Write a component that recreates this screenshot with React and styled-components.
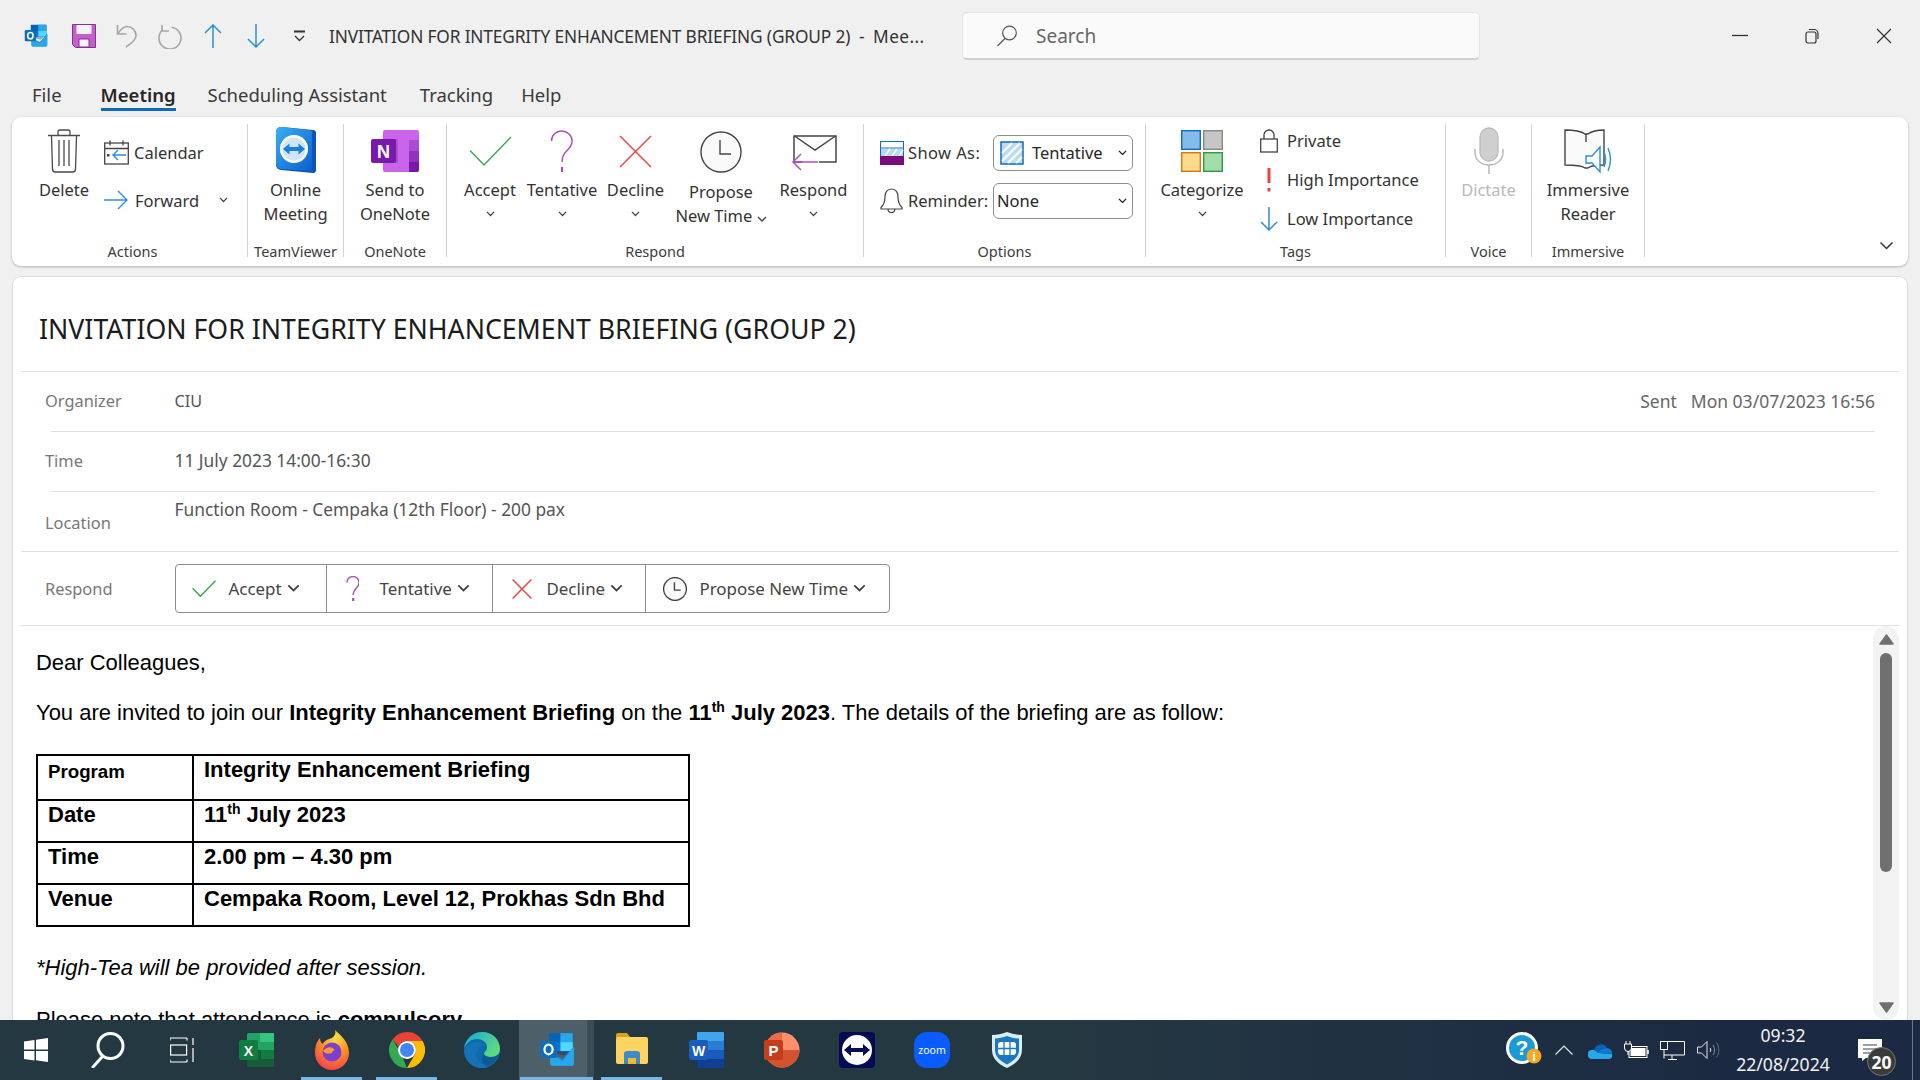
import React from "react";
import styled, { createGlobalStyle } from "styled-components";

const GlobalStyle = createGlobalStyle`
  html, body { margin: 0; padding: 0; height: 100%; overflow: hidden; }
  body { font-family: "Noto Sans", "Open Sans", sans-serif; background: #f0f0f0; color: #333; }
  * { box-sizing: border-box; }
`;

const Page = styled.div`
  width: 1920px;
  height: 1080px;
  display: flex;
  flex-direction: column;
  overflow: hidden;
`;

/* title bar */
const TitleBar = styled.div`
  height: 72px;
  flex: none;
  display: flex;
  align-items: center;
  padding-left: 24px;
`;
const QuickSlot = styled.div`
  width: ${(p) => p.$w}px;
  height: 24px;
  flex: none;
  display: flex;
  align-items: center;
`;
const WindowTitle = styled.div`
  width: 633px;
  flex: none;
  font-size: 17.3px;
  color: #333;
  white-space: pre;
  letter-spacing: -0.14px;
`;
const TitleTail = styled.span`
  letter-spacing: 0.4px;
`;
const SearchBox = styled.div`
  width: 518px;
  height: 48px;
  flex: none;
  display: flex;
  align-items: center;
  gap: 18px;
  padding-left: 33px;
  background: #fafafa;
  border: 1px solid #e4e4e4;
  border-bottom: 2px solid #cfcfcf;
  border-radius: 5px;
  font-size: 19px;
  color: #666;
`;
const WindowControls = styled.div`
  margin-left: auto;
  display: flex;
  padding-right: 28px;
  gap: 56px;
`;

/* tabs */
const TabRow = styled.div`
  height: 45px;
  flex: none;
  display: flex;
  padding-left: 32px;
`;
const Tab = styled.div`
  margin-right: ${(p) => p.$gap}px;
  height: 39px;
  line-height: 46px;
  font-size: 18.5px;
  color: ${(p) => (p.$active ? "#262626" : "#3a3a3a")};
  font-weight: ${(p) => (p.$active ? 600 : 400)};
  border-bottom: ${(p) => (p.$active ? "3px solid #0f6cbd" : "none")};
  white-space: nowrap;
`;

/* ribbon */
const Ribbon = styled.div`
  height: 149px;
  flex: none;
  margin: 0 12px;
  padding-top: 7px;
  display: flex;
  position: relative;
  background: #fff;
  border-radius: 9px;
  box-shadow: 0 1px 3px rgba(0, 0, 0, 0.25);
`;
const Group = styled.div`
  width: ${(p) => p.$w}px;
  height: 133px;
  flex: none;
  display: flex;
  flex-direction: column;
  border-right: 1px solid #d2d2d2;
`;
const GroupBody = styled.div`
  flex: 1;
  min-height: 0;
  display: flex;
  justify-content: ${(p) => p.$justify || "flex-start"};
  padding-left: ${(p) => p.$pad || 0}px;
`;
const GroupLabel = styled.div`
  height: 18px;
  margin-bottom: -3px;
  line-height: 18px;
  text-align: center;
  font-size: 14.5px;
  color: #3c3c3c;
  padding-left: ${(p) => p.$indent || 0}px;
  white-space: nowrap;
`;
const BigButton = styled.div`
  width: ${(p) => p.$w || 72}px;
  flex: none;
  display: flex;
  flex-direction: column;
  align-items: center;
  font-size: 16.5px;
  line-height: 24px;
  color: ${(p) => (p.$disabled ? "#b9b9b9" : "#333")};
  white-space: nowrap;
`;
const BigIcon = styled.div`
  height: ${(p) => p.$h || 54}px;
  padding-top: ${(p) => p.$shift || 0}px;
  flex: none;
  display: flex;
  align-items: center;
  justify-content: center;
`;
const ChevronLine = styled.div`
  height: 24px;
  display: flex;
  align-items: center;
`;
const SmallColumn = styled.div`
  display: flex;
  flex-direction: column;
  margin-top: ${(p) => p.$top}px;
  margin-left: ${(p) => p.$left || 0}px;
  width: ${(p) => p.$w}px;
`;
const SmallRow = styled.div`
  height: ${(p) => p.$h}px;
  display: flex;
  align-items: center;
  font-size: 16.5px;
  color: #333;
  white-space: nowrap;
`;
const SmallIcon = styled.div`
  width: ${(p) => p.$w}px;
  flex: none;
  display: flex;
  align-items: center;
`;
const PushRight = styled.span`
  margin-left: auto;
  display: flex;
`;
const OptionLabel = styled.div`
  width: 85px;
  flex: none;
  letter-spacing: ${(p) => p.$ls || 0}px;
`;
const FakeSelect = styled.div`
  width: 140px;
  height: 36px;
  display: flex;
  align-items: center;
  padding: 0 5px 0 ${(p) => p.$pad}px;
  gap: ${(p) => p.$gap || 0}px;
  border: 1px solid #8e8e8e;
  border-radius: 6px;
  font-size: 16.5px;
  color: #262626;
`;
const RibbonCollapse = styled.div`
  position: absolute;
  right: 14px;
  top: 124px;
  display: flex;
`;

/* message card */
const Card = styled.div`
  flex: 1;
  min-height: 0;
  margin: 10px 12px 0;
  padding: 0 8px;
  display: flex;
  flex-direction: column;
  background: #fff;
  border: 1px solid #dcdcdc;
  border-bottom: none;
  border-radius: 9px 9px 0 0;
  overflow: hidden;
`;
const Subject = styled.div`
  height: 94px;
  flex: none;
  padding-left: 18px;
  padding-top: 8px;
  display: flex;
  align-items: center;
  font-size: 26.7px;
  color: #1c1c1c;
  white-space: nowrap;
`;
const Rule = styled.div`
  height: 1px;
  flex: none;
  margin: 0 ${(p) => p.$right || 0}px 0 ${(p) => p.$left || 0}px;
  background: #e0e0e0;
`;
const MetaRow = styled.div`
  height: ${(p) => p.$h || 59}px;
  flex: none;
  display: flex;
  align-items: center;
  padding: 0 24px ${(p) => p.$lift || 0}px;
  font-size: 16.4px;
`;
const MetaLabel = styled.div`
  width: 129.5px;
  flex: none;
  color: #777;
  margin-top: ${(p) => p.$top || 0}px;
`;
const MetaValue = styled.div`
  color: #555;
  font-size: ${(p) => p.$size || 17.35}px;
  margin-bottom: ${(p) => p.$bottom || 0}px;
`;
const SentInfo = styled.div`
  margin-left: auto;
  display: flex;
  gap: 14px;
  color: #666;
  font-size: 17.5px;
`;
const RespondBar = styled.div`
  height: 49px;
  display: flex;
  border: 1.5px solid #8c8c8c;
  border-radius: 4px;
`;
const RespondButton = styled.div`
  width: ${(p) => p.$w}px;
  flex: none;
  display: flex;
  align-items: center;
  padding-left: ${(p) => p.$pad}px;
  font-size: 16.9px;
  color: #444;
  white-space: nowrap;
  & + & {
    border-left: 1.5px solid #8c8c8c;
  }
`;
const RespondIcon = styled.div`
  width: ${(p) => p.$w}px;
  flex: none;
  display: flex;
  align-items: center;
`;
const RespondChevron = styled.span`
  margin-left: 5px;
  display: flex;
`;

/* mail body */
const BodyWrap = styled.div`
  flex: 1;
  min-height: 0;
  display: flex;
`;
const MailBody = styled.div`
  flex: 1;
  min-width: 0;
  padding: 23px 0 0 15px;
  font-family: "Liberation Sans", Arial, sans-serif;
  font-size: 21.97px;
  line-height: 28px;
  color: #000;
`;
const Para = styled.p`
  margin: 0 0 ${(p) => p.$after}px;
  & sup {
    font-size: 14px;
    line-height: 0;
  }
`;
const InfoTable = styled.table`
  width: 654px;
  border-collapse: collapse;
  table-layout: fixed;
  margin-bottom: 27px;
  font-weight: 700;
  line-height: 24px;
  & sup {
    font-size: 14px;
    line-height: 0;
  }
`;
const Cell = styled.td`
  border: 2.5px solid #000;
  height: ${(p) => p.$h}px;
  padding: ${(p) => p.$top || 0}px 0 0 ${(p) => p.$left || 10}px;
  vertical-align: top;
  font-size: ${(p) => p.$size || 22}px;
`;
const ScrollTrack = styled.div`
  width: 26px;
  flex: none;
  display: flex;
  flex-direction: column;
  align-items: center;
  padding: 8px 0 7px;
  background: #f3f3f3;
  border-radius: 13px;
`;
const ScrollThumb = styled.div`
  width: 12px;
  height: 219px;
  margin: 8px 0 auto;
  border-radius: 6px;
  background: #707070;
`;

/* taskbar */
const Taskbar = styled.div`
  height: 60px;
  flex: none;
  display: flex;
  background: linear-gradient(90deg, #243842 0%, #243842 55%, #1b2a42 90%);
`;
const TaskSlot = styled.div`
  width: ${(p) => p.$w || 75}px;
  flex: none;
  position: relative;
  display: flex;
  align-items: center;
  justify-content: center;
  background: ${(p) => (p.$active ? "linear-gradient(90deg, #4d5f68 0 68px, #3b4c55 68px 75px)" : "none")};
`;
const RunningBar = styled.div`
  position: absolute;
  bottom: 0;
  left: ${(p) => (p.$active ? 1 : 7)}px;
  width: ${(p) => (p.$active ? 73 : 61)}px;
  height: 3px;
  background: #76b5e6;
`;
const Tray = styled.div`
  margin-left: auto;
  display: flex;
  align-items: stretch;
  color: #fff;
`;
const TrayItem = styled.div`
  width: ${(p) => p.$w}px;
  flex: none;
  display: flex;
  align-items: center;
  justify-content: center;
  position: relative;
  padding: ${(p) => p.$pad || "0"};
`;
const Clock = styled.div`
  width: 114px;
  flex: none;
  display: flex;
  flex-direction: column;
  align-items: center;
  padding-top: 1px;
  font-size: 17.6px;
  line-height: 29px;
  color: #f2f2f2;
`;
const NotifyBadge = styled.div`
  position: absolute;
  left: 27px;
  top: 27px;
  width: 29px;
  height: 29px;
  border-radius: 50%;
  display: flex;
  align-items: center;
  justify-content: center;
  background: #3a3a3a;
  border: 1px solid #777;
  font-size: 17.5px;
  font-weight: 700;
  color: #fff;
`;
const TrayStripe = styled.div`
  width: 1px;
  margin-right: 7px;
  background: #6d7785;
  flex: none;
`;

/* icons */
const Chevron = ({ w = 9, color = "#444", sw = 1.4 }) => (
  <svg width={w} height={w * 0.62} viewBox="0 0 10 6.2" fill="none">
    <path d="M1 1l4 4 4-4" stroke={color} strokeWidth={sw} />
  </svg>
);

const OutlookIcon = ({ size = 24 }) => (
  <svg width={size} height={size} viewBox="0 0 32 32">
    <rect x="9" y="1" width="21" height="16" rx="1" fill="#0364b8" />
    <rect x="19" y="1" width="11" height="8" fill="#28a8ea" />
    <rect x="9" y="9" width="10" height="8" fill="#0078d4" />
    <rect x="19" y="9" width="11" height="8" fill="#50d9ff" />
    <path d="M9 17h21v-2l-8 6z" fill="#0a2767" opacity=".35" />
    <path d="M31 13v15a2 2 0 0 1-2 2H12a2 2 0 0 1-2-2v-9l11 5z" fill="#1490df" />
    <path d="M31 13l-10 13-11-7v9a2 2 0 0 0 2 2h17a2 2 0 0 0 2-2z" fill="#28a8ea" />
    <rect x="1" y="8" width="15" height="15" rx="1.5" fill="#0f6cbd" />
    <ellipse cx="8.5" cy="15.5" rx="3.6" ry="4.3" fill="none" stroke="#fff" strokeWidth="2" />
  </svg>
);

const SaveIcon = () => (
  <svg width="24" height="24" viewBox="0 0 24 24">
    <path d="M.5.5h23v23H3.5l-3-3z" fill="#c55fcb" stroke="#8a2d96" />
    <rect x="4.5" y="1" width="15" height="9" fill="#f4f4f4" />
    <rect x="7" y="15" width="10" height="8" fill="#f4f4f4" stroke="#8a2d96" />
  </svg>
);

const UndoIcon = () => (
  <svg width="22" height="24" viewBox="0 0 22 24" fill="none" stroke="#a6a6a6" strokeWidth="1.6">
    <path d="M1.500 1v9h9" />
    <path d="M2 9.500C5 5 8 2.500 11 2.500c5 0 9 4 9 9 0 3.500-3 7-10 11.500" />
  </svg>
);

const RedoIcon = () => (
  <svg width="24" height="25" viewBox="0 0 24 25" fill="none" stroke="#a6a6a6" strokeWidth="1.6">
    <path d="M4.500 6a11 11 0 1 0 9-2.800" />
    <path d="M4 1v6h7" />
  </svg>
);

const ArrowV = ({ up, h = 24, w = 18, color = "#2b8fd6", sw = 1.5 }) => (
  <svg width={w} height={h} viewBox={`0 0 ${w} ${h}`} fill="none" stroke={color} strokeWidth={sw}>
    {up ? (
      <path d={`M${w / 2} ${h}V1M1 ${w / 2}L${w / 2} 1l${w / 2 - 1} ${w / 2 - 1}`} />
    ) : (
      <path d={`M${w / 2} 0V${h - 1}M1 ${h - w / 2}L${w / 2} ${h - 1}l${w / 2 - 1} -${w / 2 - 1}`} />
    )}
  </svg>
);

const CustomizeIcon = () => (
  <svg width="13" height="13" viewBox="0 0 13 13" fill="none" stroke="#333" strokeWidth="1.3">
    <path d="M1 1.500h11" strokeWidth="2" />
    <path d="M2 6l4.500 4.500L11 6" />
  </svg>
);

const SearchIcon = () => (
  <svg width="22" height="22" viewBox="0 0 22 22" fill="none" stroke="#555" strokeWidth="1.2">
    <circle cx="13.500" cy="8" r="6.800" />
    <path d="M9 13.500L1.500 21" />
  </svg>
);

const MinimizeIcon = () => (
  <svg width="16" height="16" viewBox="0 0 16 16"><path d="M0 7.500h16" stroke="#333" strokeWidth="1.3" /></svg>
);
const RestoreIcon = () => (
  <svg width="16" height="16" viewBox="0 0 16 16" fill="none" stroke="#333" strokeWidth="1.2">
    <rect x="2" y="4" width="10" height="11" rx="2" />
    <path d="M5 1.500h5a4 4 0 0 1 4 4V11" />
  </svg>
);
const CloseIcon = () => (
  <svg width="16" height="16" viewBox="0 0 16 16" stroke="#333" strokeWidth="1.2"><path d="M1 1l14 14M15 1L1 15" /></svg>
);

const TrashIcon = () => (
  <svg width="34" height="44" viewBox="0 0 34 44" fill="none" stroke="#4a4a4a" strokeWidth="1.3">
    <path d="M1 6.500h32M11 6V3a2 2 0 0 1 2-2h8a2 2 0 0 1 2 2v3" />
    <path d="M4.500 7l1 33a3 3 0 0 0 3 3h17a3 3 0 0 0 3-3l1-33" />
    <path d="M12 11v26M17 11v26M22 11v26" />
  </svg>
);

const CalendarIcon = () => (
  <svg width="25" height="25" viewBox="0 0 25 25" fill="none">
    <rect x=".7" y="3" width="23.600" height="21" stroke="#444" strokeWidth="1.300" />
    <path d="M1 8.500h23M6 .5v5M19 .5v5" stroke="#444" strokeWidth="1.300" />
    <rect x="3" y="14" width="2.500" height="2.500" fill="#444" />
    <path d="M22 15H9M14 10l-5 5 5 5" stroke="#2b8fd6" strokeWidth="1.400" />
  </svg>
);

const ForwardIcon = () => (
  <svg width="24" height="20" viewBox="0 0 24 20" fill="none" stroke="#2b8fd6" strokeWidth="1.400">
    <path d="M0 10h22.500M14 1l9 9-9 9" />
  </svg>
);

const TeamViewerBig = () => (
  <svg width="40" height="48" viewBox="0 0 40 48">
    <defs>
      <linearGradient id="tvb" x1="0" y1="0" x2="1" y2="1">
        <stop offset="0" stopColor="#37b0f0" />
        <stop offset="1" stopColor="#0a5fd0" />
      </linearGradient>
    </defs>
    <path d="M6 0l31 3a3 3 0 0 1 3 3v36a3 3 0 0 1-3 4L5 43a5 5 0 0 1-5-5V5a5 5 0 0 1 6-5z" fill="#0f55b8" />
    <path d="M5 0l28 3a3 3 0 0 1 3 3v36a2 2 0 0 1-2 2L5 42a5 5 0 0 1-5-5V5a5 5 0 0 1 5-5z" fill="url(#tvb)" />
    <circle cx="18" cy="22" r="14" fill="#fff" />
    <circle cx="18" cy="22" r="11.500" fill="#cfe6f7" />
    <path d="M7 22l6.500-5.500V20h9v-3.500L29 22l-6.500 5.500V24h-9v3.500z" fill="#1c7fdc" />
  </svg>
);

const OneNoteBig = () => (
  <svg width="48" height="42" viewBox="0 0 48 42">
    <rect x="12" y="0" width="36" height="42" rx="2" fill="#ca64ea" />
    <rect x="38" y="10" width="10" height="11" fill="#ae4bd5" />
    <rect x="38" y="21" width="10" height="11" fill="#9332bf" />
    <path d="M38 32h10v8a2 2 0 0 1-2 2h-8z" fill="#7719aa" />
    <rect x="12" y="9" width="15" height="24" fill="#4b1a6e" opacity=".25" />
    <rect x="0" y="9" width="25" height="24" rx="2" fill="#7719aa" />
    <text x="12.500" y="28" textAnchor="middle" fontFamily="Liberation Sans" fontWeight="700" fontSize="18" fill="#fff">N</text>
  </svg>
);

const CheckIcon = ({ w = 43, h = 30, sw = 1.4 }) => (
  <svg width={w} height={h} viewBox="0 0 43 30" fill="none" stroke="#3fa35c" strokeWidth={sw * (43 / w)}>
    <path d="M1 14.500L15 29 42 1" />
  </svg>
);

const QuestionIcon = ({ h = 42 }) => (
  <svg width={h * 0.55} height={h} viewBox="0 0 23 42" fill="none" stroke="#a94bb9" strokeWidth={1.4 * (42 / h)}>
    <path d="M1.500 11C1.500 5 6 1 11.500 1S22 5 22 11c0 4-2 6.500-4.500 9-3.500 3.500-5.500 6-5.500 12" />
    <path d="M12 37v5" strokeWidth={2.2 * (42 / h)} />
  </svg>
);

const CrossIcon = ({ s = 33, sw = 1.4 }) => (
  <svg width={s} height={s} viewBox="0 0 33 33" fill="none" stroke="#e9423f" strokeWidth={sw * (33 / s)}>
    <path d="M1 1l31 31M32 1L1 32" />
  </svg>
);

const ClockIcon = ({ s = 42, sw = 1.4 }) => (
  <svg width={s} height={s} viewBox="0 0 42 42" fill="none" stroke="#444" strokeWidth={sw * (42 / s)}>
    <circle cx="21" cy="21" r="20" fill="#fafafa" />
    <path d="M20 9v14h11" />
  </svg>
);

const RespondMailIcon = () => (
  <svg width="46" height="38" viewBox="0 0 46 38" fill="none">
    <path d="M12 28H4V2h42v26H29" stroke="#444" strokeWidth="1.500" transform="translate(-1 0)" />
    <path d="M3.500 2L24 16 44.500 2" stroke="#444" strokeWidth="1.500" />
    <path d="M27 28H2M10 20l-8 8 8 8" stroke="#b050c4" strokeWidth="1.500" />
  </svg>
);

const ShowAsIcon = () => (
  <svg width="24" height="24" viewBox="0 0 24 24">
    <rect x=".5" y=".5" width="23" height="15" fill="#fff" stroke="#0f6cbd" />
    <path d="M1 7h22" stroke="#0f6cbd" />
    <rect x="1" y="8" width="22" height="7" fill="#b5d8f3" />
    <path d="M5 15l5-7M12 15l5-7M19 15l4-6" stroke="#fff" strokeWidth="1.500" />
    <rect y="15" width="24" height="9" fill="#7a0d7e" />
  </svg>
);

const BellIcon = () => (
  <svg width="23" height="25" viewBox="0 0 23 25" fill="none" stroke="#444" strokeWidth="1.200">
    <path d="M11.500 1C7 1 5 4.500 5 9c0 5-1.500 8-4 10.500v1.500h21v-1.500C19.500 17 18 14 18 9c0-4.500-2-8-6.500-8z" />
    <path d="M8 21a3.500 3.500 0 0 0 7 0" />
  </svg>
);

const TentativeSwatch = () => (
  <svg width="24" height="24" viewBox="0 0 24 24">
    <rect x="1" y="1" width="22" height="22" fill="#bcdcf5" stroke="#0f6cbd" strokeWidth="1.500" />
    <path d="M2 12L12 2M2 20L20 2M8 22L22 8M16 22l6-6" stroke="#fff" strokeWidth="2" />
  </svg>
);

const CategorizeIcon = () => (
  <svg width="42" height="42" viewBox="0 0 42 42">
    <rect x=".7" y=".7" width="18.600" height="18.600" fill="#83bcea" stroke="#0f6cbd" strokeWidth="1.400" />
    <rect x="22.700" y=".7" width="18.600" height="18.600" fill="#c8c6c4" stroke="#8a8886" strokeWidth="1.400" />
    <rect x=".7" y="22.700" width="18.600" height="18.600" fill="#fadb8e" stroke="#e3730e" strokeWidth="1.400" />
    <rect x="22.700" y="22.700" width="18.600" height="18.600" fill="#a3dea8" stroke="#2f9a4c" strokeWidth="1.400" />
  </svg>
);

const LockIcon = () => (
  <svg width="18" height="24" viewBox="0 0 18 24" fill="none" stroke="#444" strokeWidth="1.300">
    <rect x=".7" y="10" width="16.600" height="13" />
    <path d="M4 10V6a5 5 0 0 1 10 0v4" />
  </svg>
);

const ImportanceIcon = () => (
  <svg width="18" height="24" viewBox="0 0 18 24">
    <rect x="7.500" y="0" width="3" height="15" fill="#e9423f" />
    <rect x="7.500" y="20" width="3" height="3.500" fill="#e9423f" />
  </svg>
);

const MicIcon = () => (
  <svg width="30" height="48" viewBox="0 0 30 48" fill="none">
    <rect x="6" y="1" width="18" height="33" rx="9" fill="#cfcfcf" stroke="#bbb" strokeWidth="1.300" />
    <path d="M1 22v3c0 8 6 13 14 13s14-5 14-13v-3M15 38v9" stroke="#bbb" strokeWidth="1.500" />
  </svg>
);

const ReaderIcon = () => (
  <svg width="48" height="46" viewBox="0 0 48 46" fill="none">
    <path d="M21 6C17 3 9 2 1 2v35c8 0 16 0 20 3h3c4-3 9-3 16-3V2c-7 0-12 1-16 4z" fill="#fafafa" stroke="#444" strokeWidth="1.400" />
    <path d="M22 6v8" stroke="#444" strokeWidth="1.400" />
    <path d="M22 28h6l8-9v25l-8-9h-6z" fill="#fff" stroke="#2b8fd6" strokeWidth="1.400" />
    <path d="M40 24c2 4 2 11 0 15M44 20c3 7 3 16 0 23" stroke="#2b8fd6" strokeWidth="1.400" />
  </svg>
);

const ScrollArrow = ({ down }) => (
  <svg width="15" height="11" viewBox="0 0 15 11">
    <path d={down ? "M1 1h13L7.500 10z" : "M7.500 1L14 10H1z"} fill="#707070" stroke="#707070" strokeLinejoin="round" strokeWidth="1.500" />
  </svg>
);

/* taskbar icons */
const WindowsIcon = () => (
  <svg width="24" height="24" viewBox="0 0 24 24" fill="#fff">
    <path d="M0 3.500l10.500-1.500v9.500H0zM12 1.800L24 0v11.500H12zM0 13h10.500v9.500L0 21zM12 13h12v11l-12-1.700z" />
  </svg>
);
const BigSearchIcon = () => (
  <svg width="34" height="36" viewBox="0 0 34 36" fill="none" stroke="#fff" strokeWidth="3">
    <ellipse cx="19.500" cy="14" rx="12.500" ry="12.500" />
    <path d="M11 25L2 35" strokeLinecap="round" />
  </svg>
);
const TaskViewIcon = () => (
  <svg width="24" height="26" viewBox="0 0 24 26" fill="none" stroke="#fff" strokeWidth="1.200">
    <path d="M0 1h17M0 3.500V1M17 3.500V1M0 25h17M0 22.500V25M17 22.500V25" />
    <rect x=".6" y="8" width="16" height="10" />
    <path d="M23 1v7M23 11v14" />
  </svg>
);
const ExcelIcon = () => (
  <svg width="36" height="34" viewBox="0 0 36 34">
    <rect x="8" y="0" width="27" height="34" rx="2" fill="#21a366" />
    <rect x="21" y="0" width="14" height="9" fill="#33c481" />
    <rect x="21" y="17" width="14" height="9" fill="#107c41" />
    <rect x="8" y="17" width="14" height="17" fill="#185c37" />
    <rect x="21" y="26" width="14" height="8" fill="#185c37" />
    <rect x="0" y="7" width="19" height="20" rx="2" fill="#107c41" />
    <text x="9.500" y="22.500" textAnchor="middle" fontFamily="Liberation Sans" fontWeight="700" fontSize="14" fill="#fff">X</text>
  </svg>
);
const FirefoxIcon = () => (
  <svg width="36" height="40" viewBox="0 0 36 40">
    <defs>
      <radialGradient id="ffb" cx="0.6" cy="0.2" r="1">
        <stop offset="0" stopColor="#ffe14d" />
        <stop offset="0.45" stopColor="#ff8a1f" />
        <stop offset="1" stopColor="#f01f6e" />
      </radialGradient>
    </defs>
    <path d="M21 0c5 5 14 11 14 23a17 17 0 0 1-34 0C1 16 3 11 6 8c0 3 1 5 3 6 1-3 5-5 9-6 3-2 4-5 3-8z" fill="url(#ffb)" />
    <circle cx="18" cy="22" r="9.500" fill="#7b3fd1" />
    <path d="M9 21c3-4 8-5 11-2 2 2-3 2-2 4-4 1-6 1-9-2z" fill="#ff9a2e" />
  </svg>
);
const ChromeIcon = () => (
  <svg width="36" height="36" viewBox="0 0 36 36">
    <path d="M18 0a18 18 0 0 1 15.600 9H18a9 9 0 0 0-8.400 5.700L3.500 7.500A18 18 0 0 1 18 0z" fill="#ea4335" />
    <path d="M33.600 9A18 18 0 0 1 18 36l7.800-13.500A9 9 0 0 0 25.800 13.500L18 9z" fill="#fbbc04" />
    <path d="M3.500 7.500l7 11.500 4 8.500L18 36A18 18 0 0 1 3.500 7.500z" fill="#34a853" />
    <circle cx="18" cy="18" r="9" fill="#fff" />
    <circle cx="18" cy="18" r="7" fill="#4285f4" />
  </svg>
);
const EdgeIcon = () => (
  <svg width="36" height="36" viewBox="0 0 36 36">
    <defs>
      <linearGradient id="edg" x1="0" y1="0" x2="1" y2="0.6">
        <stop offset="0" stopColor="#1aa5de" />
        <stop offset="1" stopColor="#5fdc7c" />
      </linearGradient>
    </defs>
    <circle cx="18" cy="18" r="18" fill="#0f6aa8" />
    <path d="M0 17C1 7 9 0 18 0c10 0 18 7 18 17 0 5-4 8-9 8-4 0-7-1-7-3 0-2 3-3 3-7 0-5-5-8-10-8C7 7 2 11 0 17z" fill="url(#edg)" />
    <path d="M13 20c-2 7 4 13 12 14-2 1-4 2-7 2C8 36 1 29 0 19c2-5 7-9 13-9 3 0 5 1 6 3-3 1-5 3-6 7z" fill="#1572b6" />
    <path d="M20 22c1 2 4 3 7 3 3 0 6-1 8-3-2 6-6 10-12 12-3-1-5-4-5-7 0-2 1-4 2-5z" fill="#0d4f8a" opacity=".6" />
  </svg>
);
const FolderIcon = () => (
  <svg width="32" height="34" viewBox="0 0 32 34">
    <path d="M0 2a2 2 0 0 1 2-2h9l4 5h-15z" fill="#dba21a" />
    <rect y="4" width="32" height="27" rx="2" fill="#fcd462" />
    <path d="M8 31V21a3 3 0 0 1 3-3h10a3 3 0 0 1 3 3v10h-4v-6h-8v6z" fill="#3f89c8" />
    <rect x="12" y="25" width="8" height="6" fill="#f1b92d" />
  </svg>
);
const WordIcon = () => (
  <svg width="36" height="36" viewBox="0 0 36 36">
    <rect x="8" y="0" width="27" height="9" rx="1" fill="#41a5ee" />
    <rect x="8" y="9" width="27" height="9" fill="#2b7cd3" />
    <rect x="8" y="18" width="27" height="9" fill="#185abd" />
    <rect x="8" y="27" width="27" height="9" rx="1" fill="#103f91" />
    <rect x="0" y="8" width="19" height="20" rx="2" fill="#1a5dbd" />
    <text x="9.500" y="23.500" textAnchor="middle" fontFamily="Liberation Sans" fontWeight="700" fontSize="14" fill="#fff">W</text>
  </svg>
);
const PowerPointIcon = () => (
  <svg width="36" height="36" viewBox="0 0 36 36">
    <circle cx="18" cy="18" r="17.500" fill="#ff8f6b" />
    <path d="M18 18h17.500a17.500 17.500 0 0 1-35 0z" fill="#d35230" transform="translate(0 0)" />
    <path d="M18 .5a17.500 17.500 0 0 0-17 17h17z" fill="#ed6c47" />
    <rect x="0" y="8" width="19" height="20" rx="2" fill="#c43e1c" />
    <text x="9.500" y="23.500" textAnchor="middle" fontFamily="Liberation Sans" fontWeight="700" fontSize="15" fill="#fff">P</text>
  </svg>
);
const TeamViewerTask = () => (
  <svg width="36" height="36" viewBox="0 0 36 36">
    <rect width="36" height="36" rx="4" fill="#050a52" />
    <circle cx="18" cy="18" r="15" fill="#fff" />
    <path d="M5 18l7-6v4h12v-4l7 6-7 6v-4H12v4z" fill="#050a52" />
  </svg>
);
const ZoomIcon = () => (
  <svg width="36" height="36" viewBox="0 0 36 36">
    <rect width="36" height="36" rx="13" fill="#0b5cff" />
    <text x="18" y="22" textAnchor="middle" fontFamily="Noto Sans" fontSize="10.500" fill="#fff">zoom</text>
  </svg>
);
const ShieldIcon = () => (
  <svg width="32" height="36" viewBox="0 0 32 36">
    <path d="M16 0c5 2 10 3 15 3v15c0 8-6 14-15 18C7 32 1 26 1 18V3c5 0 10-1 15-3z" fill="#d8ecfa" />
    <path d="M16 4c4 1.500 8 2.500 12 2.500V18c0 6-5 11-12 14.500C9 29 4 24 4 18V6.500C8 6.500 12 5.500 16 4z" fill="#1a78c2" />
    <rect x="7" y="10" width="18" height="13" rx="3" fill="#fff" />
    <path d="M7 16.500h18M13 10v13M19 10v13" stroke="#1a78c2" strokeWidth="1.300" />
  </svg>
);
const HelpIcon = () => (
  <svg width="40" height="38" viewBox="0 0 40 38">
    <circle cx="17" cy="17" r="16" fill="#fff" />
    <circle cx="17" cy="17" r="13" fill="#1b9ad6" />
    <text x="17" y="24" textAnchor="middle" fontFamily="Liberation Sans" fontWeight="700" fontSize="21" fill="#fff">?</text>
    <circle cx="29" cy="25" r="7.500" fill="#f5a623" />
    <text x="29" y="30" textAnchor="middle" fontFamily="Liberation Sans" fontWeight="700" fontSize="13" fill="#fff">i</text>
  </svg>
);
const TrayChevron = () => (
  <svg width="18" height="10" viewBox="0 0 18 10" fill="none" stroke="#e8e8e8" strokeWidth="1.200"><path d="M.5 9.500L9 1l8.500 8.500" /></svg>
);
const CloudIcon = () => (
  <svg width="25" height="17" viewBox="0 0 25 17">
    <path d="M6 8a7 7 0 0 1 13-2c-5 0-8 3-9 5z" fill="#0364b8" />
    <path d="M19 6a5 5 0 0 1 5 6l-8-1-6 0c1-2 4-5 9-5z" fill="#0f78d4" />
    <path d="M4 17a4 4 0 0 1 0-9c1-.5 3 0 6 3l14 1c1 3-1 5-3 5z" fill="#28a8ea" />
  </svg>
);
const BatteryIcon = () => (
  <svg width="25" height="18" viewBox="0 0 25 18" fill="none" stroke="#fff" strokeWidth="1">
    <rect x="5" y="5.500" width="18" height="11" />
    <rect x="7" y="7.500" width="14" height="7" fill="#fff" />
    <path d="M24 9v4" strokeWidth="1.500" />
    <path d="M2 0v3M6 0v3M.5 3h7v4a3 3 0 0 1-7 0zM4 10v4" fill="#1b2a42" />
  </svg>
);
const NetworkIcon = () => (
  <svg width="25" height="19" viewBox="0 0 25 19" fill="none" stroke="#fff" strokeWidth="1">
    <path d="M4 .5h20.500v13.500H4M12 14v4M8 18.500h9" />
    <rect x=".5" y=".5" width="7" height="8" fill="#1b2a42" />
    <path d="M4 8.500v9" />
  </svg>
);
const VolumeIcon = () => (
  <svg width="23" height="18" viewBox="0 0 23 18" fill="none" stroke="#dfe3e8" strokeWidth="1">
    <path d="M.5 6h4L10 .5v17L4.500 12h-4z" />
    <path d="M13 7c1 1.300 1 2.700 0 4" />
    <path d="M16 4c2 3 2 7 0 10" stroke="#8a94a3" />
    <path d="M19.500 1.500c3 4 3 11 0 15" stroke="#5f6b7c" />
  </svg>
);
const BubbleIcon = () => (
  <svg width="24" height="22" viewBox="0 0 24 22">
    <path d="M0 0h24v19H8l-4 3v-3H0z" fill="#fff" />
    <path d="M5 6h14M5 10h14M5 14h10" stroke="#444" strokeWidth="1.200" />
  </svg>
);

const taskApps = [
  { icon: <ExcelIcon /> },
  { icon: <FirefoxIcon />, running: true },
  { icon: <ChromeIcon />, running: true },
  { icon: <EdgeIcon /> },
  { icon: <OutlookIcon size={36} />, active: true },
  { icon: <FolderIcon />, running: true },
  { icon: <WordIcon /> },
  { icon: <PowerPointIcon /> },
  { icon: <TeamViewerTask /> },
  { icon: <ZoomIcon /> },
  { icon: <ShieldIcon /> },
];

export default function App() {
  return (
    <Page>
      <GlobalStyle />
      <TitleBar>
        <QuickSlot $w={48}><OutlookIcon /></QuickSlot>
        <QuickSlot $w={44}><SaveIcon /></QuickSlot>
        <QuickSlot $w={42}><UndoIcon /></QuickSlot>
        <QuickSlot $w={46}><RedoIcon /></QuickSlot>
        <QuickSlot $w={43}><ArrowV up /></QuickSlot>
        <QuickSlot $w={46}><ArrowV /></QuickSlot>
        <QuickSlot $w={36}><CustomizeIcon /></QuickSlot>
        <WindowTitle>INVITATION FOR INTEGRITY ENHANCEMENT BRIEFING (GROUP 2)  -  <TitleTail>Mee...</TitleTail></WindowTitle>
        <SearchBox>
          <SearchIcon />
          Search
        </SearchBox>
        <WindowControls>
          <MinimizeIcon />
          <RestoreIcon />
          <CloseIcon />
        </WindowControls>
      </TitleBar>

      <TabRow>
        <Tab $gap={39}>File</Tab>
        <Tab $gap={32} $active>Meeting</Tab>
        <Tab $gap={33}>Scheduling Assistant</Tab>
        <Tab $gap={28}>Tracking</Tab>
        <Tab $gap={0}>Help</Tab>
      </TabRow>

      <Ribbon>
        <Group $w={236}>
          <GroupBody $pad={16}>
            <BigButton $w={72}>
              <BigIcon><TrashIcon /></BigIcon>
              Delete
            </BigButton>
            <SmallColumn $w={124} $top={4} $left={4}>
              <SmallRow $h={48}>
                <SmallIcon $w={30}><CalendarIcon /></SmallIcon>
                Calendar
              </SmallRow>
              <SmallRow $h={48}>
                <SmallIcon $w={31}><ForwardIcon /></SmallIcon>
                Forward
                <PushRight><Chevron /></PushRight>
              </SmallRow>
            </SmallColumn>
          </GroupBody>
          <GroupLabel $indent={6}>Actions</GroupLabel>
        </Group>
        <Group $w={96}>
          <GroupBody $justify="center">
            <BigButton $w={90}>
              <BigIcon><TeamViewerBig /></BigIcon>
              <span>Online</span>
              <span>Meeting</span>
            </BigButton>
          </GroupBody>
          <GroupLabel>TeamViewer</GroupLabel>
        </Group>
        <Group $w={103}>
          <GroupBody $justify="center">
            <BigButton $w={90}>
              <BigIcon><OneNoteBig /></BigIcon>
              <span>Send to</span>
              <span>OneNote</span>
            </BigButton>
          </GroupBody>
          <GroupLabel>OneNote</GroupLabel>
        </Group>
        <Group $w={417}>
          <GroupBody $pad={7}>
            <BigButton $w={72}>
              <BigIcon><CheckIcon /></BigIcon>
              Accept
              <ChevronLine><Chevron /></ChevronLine>
            </BigButton>
            <BigButton $w={72}>
              <BigIcon><QuestionIcon /></BigIcon>
              Tentative
              <ChevronLine><Chevron /></ChevronLine>
            </BigButton>
            <BigButton $w={75}>
              <BigIcon><CrossIcon /></BigIcon>
              Decline
              <ChevronLine><Chevron /></ChevronLine>
            </BigButton>
            <BigButton $w={96}>
              <BigIcon $h={56}><ClockIcon /></BigIcon>
              <span>Propose</span>
              <span>New Time <Chevron w={10} /></span>
            </BigButton>
            <BigButton $w={89}>
              <BigIcon $shift={3}><RespondMailIcon /></BigIcon>
              Respond
              <ChevronLine><Chevron /></ChevronLine>
            </BigButton>
          </GroupBody>
          <GroupLabel>Respond</GroupLabel>
        </Group>
        <Group $w={282}>
          <GroupBody $pad={16}>
            <SmallColumn $w={254} $top={4.5}>
              <SmallRow $h={48}>
                <SmallIcon $w={28}><ShowAsIcon /></SmallIcon>
                <OptionLabel $ls={0.4}>Show As:</OptionLabel>
                <FakeSelect $pad={6} $gap={8}>
                  <TentativeSwatch />
                  Tentative
                  <PushRight><Chevron color="#222" /></PushRight>
                </FakeSelect>
              </SmallRow>
              <SmallRow $h={48}>
                <SmallIcon $w={28}><BellIcon /></SmallIcon>
                <OptionLabel>Reminder:</OptionLabel>
                <FakeSelect $pad={3}>
                  None
                  <PushRight><Chevron color="#222" /></PushRight>
                </FakeSelect>
              </SmallRow>
            </SmallColumn>
          </GroupBody>
          <GroupLabel>Options</GroupLabel>
        </Group>
        <Group $w={300}>
          <GroupBody $pad={20}>
            <BigButton $w={72}>
              <BigIcon><CategorizeIcon /></BigIcon>
              Categorize
              <ChevronLine><Chevron /></ChevronLine>
            </BigButton>
            <SmallColumn $w={190} $top={-3} $left={22}>
              <SmallRow $h={39}>
                <SmallIcon $w={27}><LockIcon /></SmallIcon>
                Private
              </SmallRow>
              <SmallRow $h={39}>
                <SmallIcon $w={27}><ImportanceIcon /></SmallIcon>
                High Importance
              </SmallRow>
              <SmallRow $h={39}>
                <SmallIcon $w={27}><ArrowV /></SmallIcon>
                Low Importance
              </SmallRow>
            </SmallColumn>
          </GroupBody>
          <GroupLabel>Tags</GroupLabel>
        </Group>
        <Group $w={86}>
          <GroupBody $justify="center">
            <BigButton $w={80} $disabled>
              <BigIcon><MicIcon /></BigIcon>
              Dictate
            </BigButton>
          </GroupBody>
          <GroupLabel>Voice</GroupLabel>
        </Group>
        <Group $w={113}>
          <GroupBody $justify="center">
            <BigButton $w={100}>
              <BigIcon><ReaderIcon /></BigIcon>
              <span>Immersive</span>
              <span>Reader</span>
            </BigButton>
          </GroupBody>
          <GroupLabel>Immersive</GroupLabel>
        </Group>
        <RibbonCollapse>
          <Chevron w={15} color="#333" sw={1} />
        </RibbonCollapse>
      </Ribbon>

      <Card>
        <Subject>INVITATION FOR INTEGRITY ENHANCEMENT BRIEFING (GROUP 2)</Subject>
        <Rule />
        <MetaRow $lift={2}>
          <MetaLabel>Organizer</MetaLabel>
          <MetaValue $size={16.2}>CIU</MetaValue>
          <SentInfo>
            <span>Sent</span>
            <span>Mon 03/07/2023 16:56</span>
          </SentInfo>
        </MetaRow>
        <Rule $left={30} $right={24} />
        <MetaRow $lift={2}>
          <MetaLabel>Time</MetaLabel>
          <MetaValue $bottom={2}>11 July 2023 14:00-16:30</MetaValue>
        </MetaRow>
        <Rule $left={30} $right={24} />
        <MetaRow $lift={2}>
          <MetaLabel $top={3}>Location</MetaLabel>
          <MetaValue $bottom={24}>Function Room - Cempaka (12th Floor) - 200 pax</MetaValue>
        </MetaRow>
        <Rule />
        <MetaRow $h={73}>
          <MetaLabel>Respond</MetaLabel>
          <RespondBar>
            <RespondButton $w={150} $pad={16}>
              <RespondIcon $w={37}><CheckIcon w={24} h={17} /></RespondIcon>
              Accept
              <RespondChevron><Chevron w={13} sw={1.4} /></RespondChevron>
            </RespondButton>
            <RespondButton $w={166} $pad={19}>
              <RespondIcon $w={34}><QuestionIcon h={25} /></RespondIcon>
              Tentative
              <RespondChevron><Chevron w={13} sw={1.4} /></RespondChevron>
            </RespondButton>
            <RespondButton $w={153} $pad={19}>
              <RespondIcon $w={35}><CrossIcon s={20} /></RespondIcon>
              Decline
              <RespondChevron><Chevron w={13} sw={1.4} /></RespondChevron>
            </RespondButton>
            <RespondButton $w={244} $pad={17}>
              <RespondIcon $w={37}><ClockIcon s={24} /></RespondIcon>
              Propose New Time
              <RespondChevron><Chevron w={13} sw={1.4} /></RespondChevron>
            </RespondButton>
          </RespondBar>
        </MetaRow>
        <Rule />
        <BodyWrap>
          <MailBody>
            <Para $after={22}>Dear Colleagues,</Para>
            <Para $after={27}>
              You are invited to join our <b>Integrity Enhancement Briefing</b> on the{" "}
              <b>11<sup>th</sup> July 2023</b>. The details of the briefing are as follow:
            </Para>
            <InfoTable>
              <colgroup>
                <col width="156" />
                <col />
              </colgroup>
              <tbody>
                <tr>
                  <Cell $h={45} $top={4} $size={18.7}>Program</Cell>
                  <Cell $h={45} $top={2}>Integrity Enhancement Briefing</Cell>
                </tr>
                <tr>
                  <Cell $h={42} $top={2}>Date</Cell>
                  <Cell $h={42} $top={2}>11<sup>th</sup> July 2023</Cell>
                </tr>
                <tr>
                  <Cell $h={42} $top={2}>Time</Cell>
                  <Cell $h={42} $top={2}>2.00 pm – 4.30 pm</Cell>
                </tr>
                <tr>
                  <Cell $h={42} $top={2}>Venue</Cell>
                  <Cell $h={42} $top={2}>Cempaka Room, Level 12, Prokhas Sdn Bhd</Cell>
                </tr>
              </tbody>
            </InfoTable>
            <Para $after={24}><i>*High-Tea will be provided after session.</i></Para>
            <Para $after={0}>Please note that attendance is <b>compulsory</b>.</Para>
          </MailBody>
          <ScrollTrack>
            <ScrollArrow />
            <ScrollThumb />
            <ScrollArrow down />
          </ScrollTrack>
        </BodyWrap>
      </Card>

      <Taskbar>
        <TaskSlot $w={72}><WindowsIcon /></TaskSlot>
        <TaskSlot $w={72}><BigSearchIcon /></TaskSlot>
        <TaskSlot $w={75}><TaskViewIcon /></TaskSlot>
        {taskApps.map((app, i) => (
          <TaskSlot key={i} $active={app.active}>
            {app.icon}
            {(app.running || app.active) && <RunningBar $active={app.active} />}
          </TaskSlot>
        ))}
        <Tray>
          <TrayItem $w={46} $pad="0 0 0 4px"><HelpIcon /></TrayItem>
          <TrayItem $w={36}><TrayChevron /></TrayItem>
          <TrayItem $w={36}><CloudIcon /></TrayItem>
          <TrayItem $w={36}><BatteryIcon /></TrayItem>
          <TrayItem $w={36}><NetworkIcon /></TrayItem>
          <TrayItem $w={36}><VolumeIcon /></TrayItem>
          <Clock>
            <span>09:32</span>
            <span>22/08/2024</span>
          </Clock>
          <TrayItem $w={72} $pad="0 12px 0 0">
            <BubbleIcon />
            <NotifyBadge>20</NotifyBadge>
          </TrayItem>
          <TrayStripe />
        </Tray>
      </Taskbar>
    </Page>
  );
}
